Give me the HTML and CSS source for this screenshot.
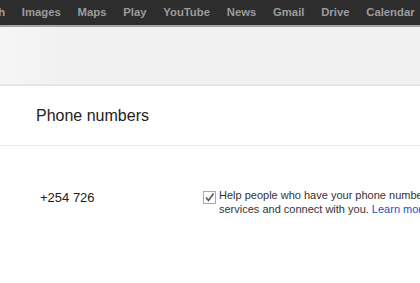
FILE: index.html
```html
<!DOCTYPE html>
<html>
<head lang="en">
    <meta charset="UTF-8">
    <title>Phone numbers</title>
    <link rel="stylesheet" href="styles.css">
</head>
<body>
<div id="gbar">
    <ul class="nav">
        <li>Search</li>
        <li>Images</li>
        <li>Maps</li>
        <li>Play</li>
        <li>YouTube</li>
        <li>News</li>
        <li>Gmail</li>
        <li>Drive</li>
        <li>Calendar</li>
        <li>Translate</li>
    </ul>
</div>
<div id="header"></div>
<div class="section-title">Phone numbers</div>
<div class="phone-row">
    <div class="number">+254 726</div>
    <div class="option">
        <span class="check">
            <svg width="13" height="13" viewBox="0 0 13 13">
                <rect x="0.5" y="0.5" width="12" height="12" fill="#fff" stroke="#a9a9a9"/>
                <path d="M3 6.5 L5.5 9.5 L10.5 2.5" fill="none" stroke="#555" stroke-width="1.6"/>
            </svg>
        </span>
        <p class="desc">Help people who have your phone number find you across Google<br>
            services and connect with you. <a href="#">Learn more</a></p>
    </div>
</div>
</body>
</html>
```

FILE: styles.css
```css
*{
    padding: 0;
    margin: 0;
}
ul{
    list-style: none;
}
body{
    font-family: "Liberation Sans", Arial, sans-serif;
    color: #222;
    background: #fff;
    overflow: hidden;
}
#gbar{
    height: 25px;
    background: #2d2d2d;
    border-bottom: 2px solid #a5a5a5;
    overflow: hidden;
}
#gbar .nav{
    display: flex;
    margin-left: -41px;
    white-space: nowrap;
}
#gbar .nav li{
    padding: 0 8.4px;
    font-size: 11.3px;
    font-weight: bold;
    line-height: 25px;
    color: #9c9c9c;
}
#header{
    height: 57px;
    background: linear-gradient(to right, #f6f6f6, #f1f1f1 60px);
    border-bottom: 2px solid #e5e5e5;
}
.section-title{
    padding: 20px 0 19px 36px;
    font-size: 16px;
    line-height: 20px;
    color: #222;
    border-bottom: 1px solid #ebebeb;
}
.phone-row{
    display: flex;
    padding-top: 42px;
}
.number{
    width: 203px;
    padding: 2px 0 0 40px;
    box-sizing: border-box;
    font-size: 13px;
    line-height: 16px;
    flex-shrink: 0;
}
.option{
    display: flex;
    white-space: nowrap;
}
.check{
    width: 13px;
    height: 13px;
    margin: 3px 3px 0 0;
    flex-shrink: 0;
}
.check svg{
    display: block;
}
.desc{
    font-size: 11px;
    line-height: 14px;
    color: #333;
}
.desc a{
    color: #15c;
    text-decoration: none;
}
```
